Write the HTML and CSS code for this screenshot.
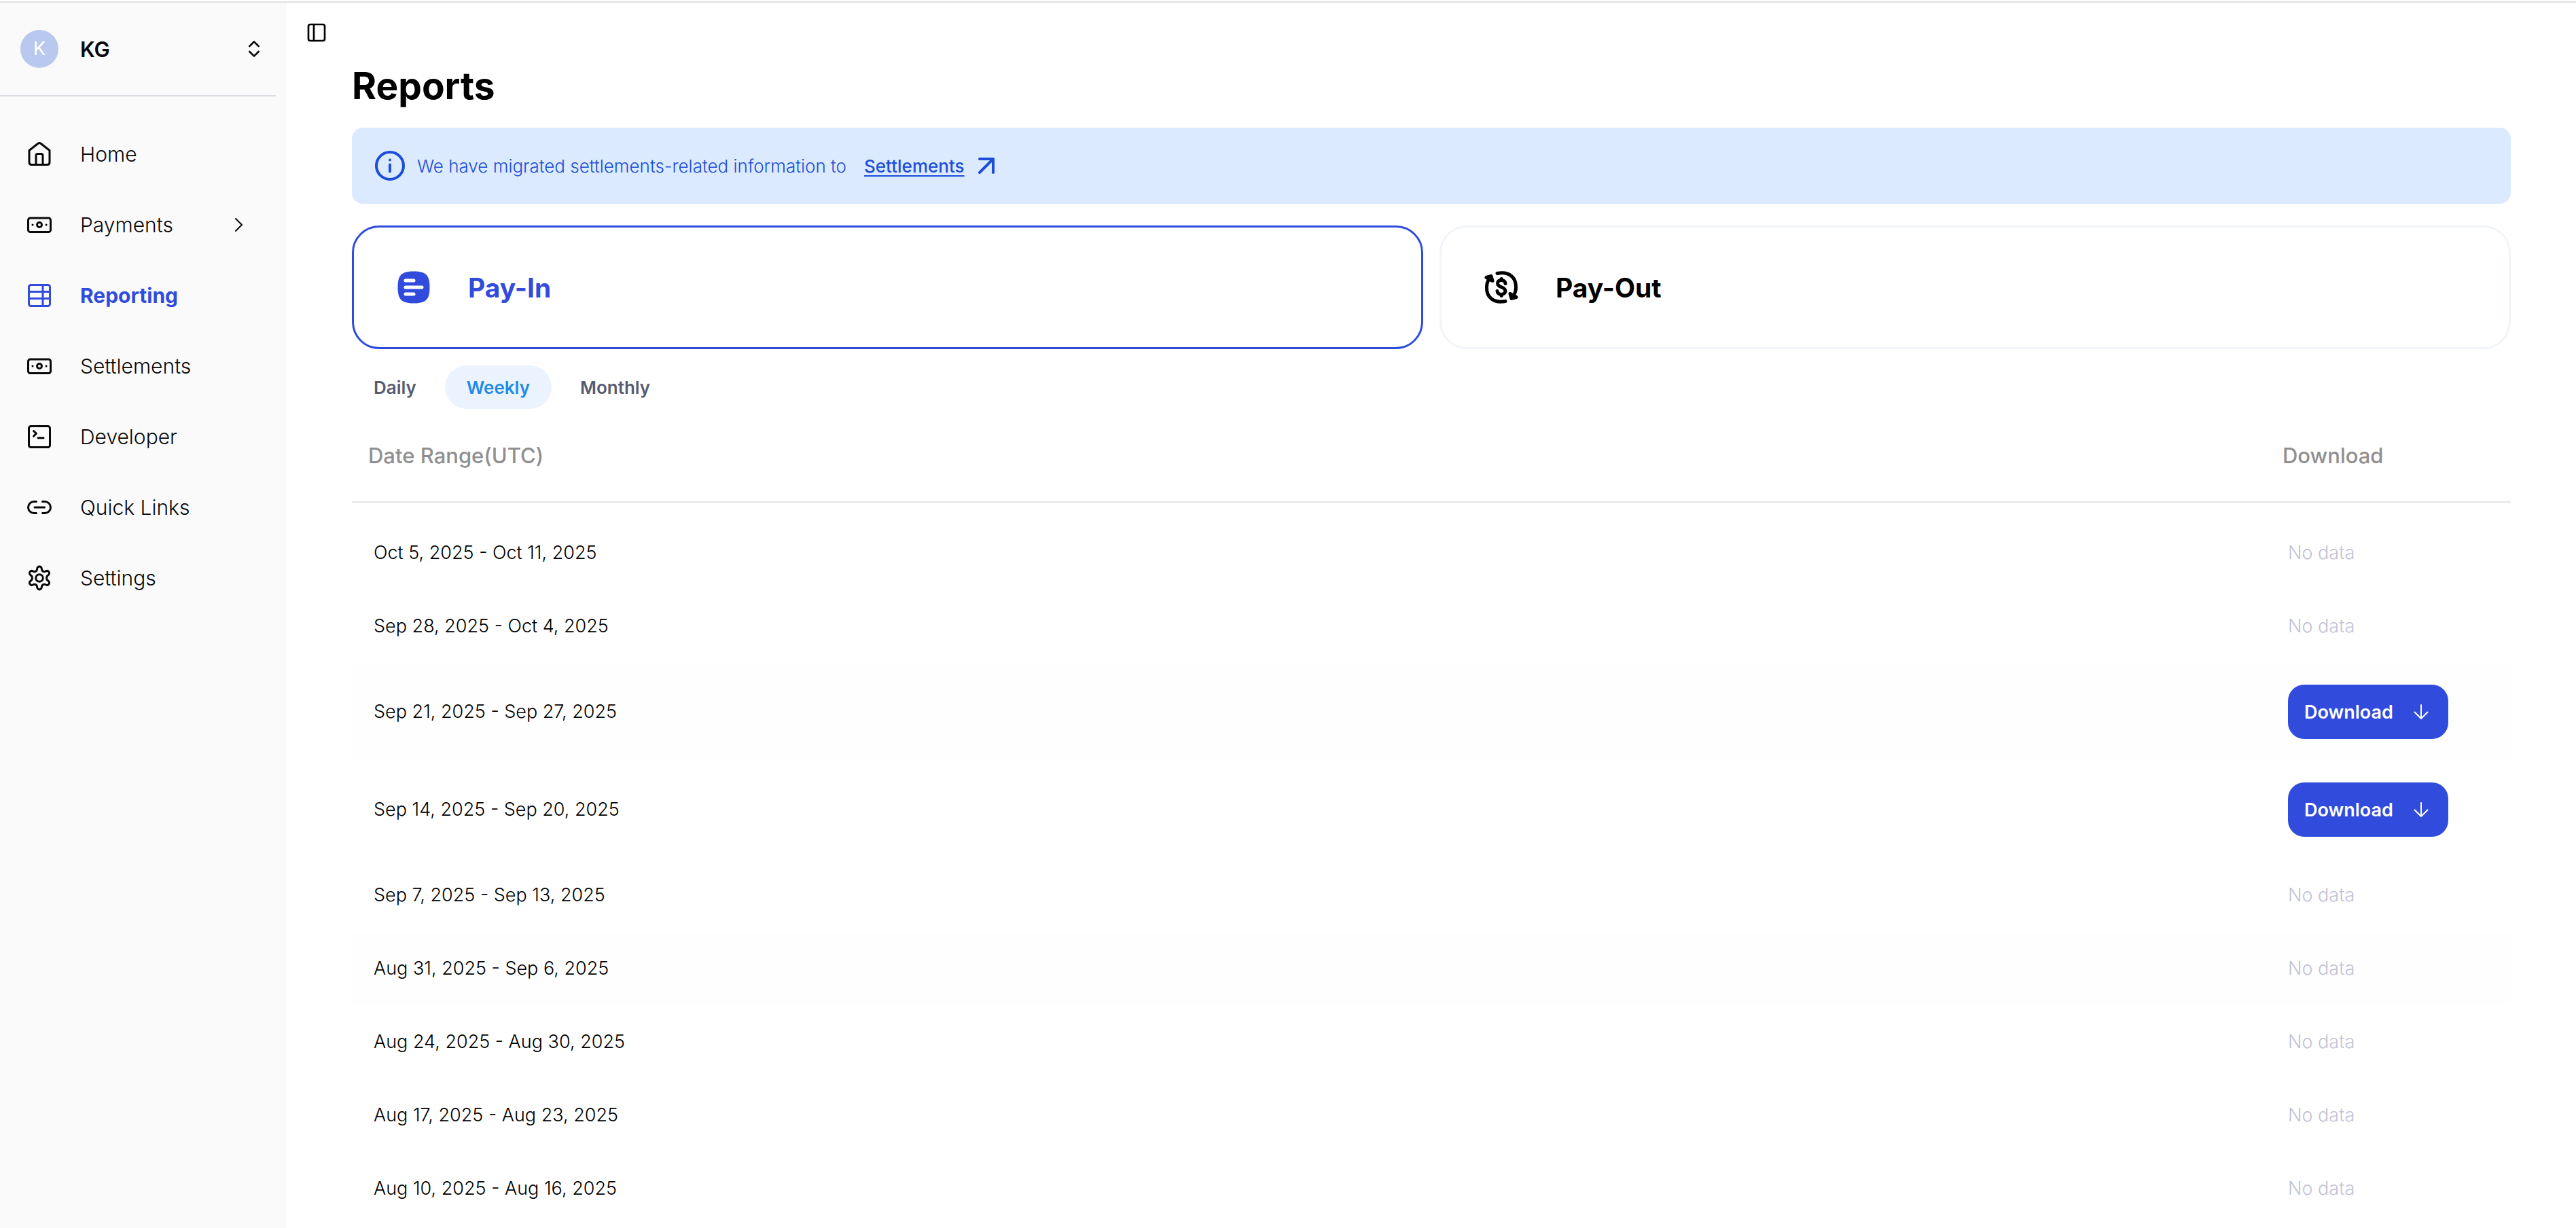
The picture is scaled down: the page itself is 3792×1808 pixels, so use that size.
FILE: index.html
```
<!DOCTYPE html>
<html lang="en">

<head>
    <meta charset="UTF-8">
    <meta name="viewport" content="width=device-width, initial-scale=1.0">
    <title>Reports</title>
    <link rel="stylesheet" href="styles.css">
</head>

<body>
    <div class="top-line"></div>
    <div class="layout">
        <aside class="sidebar">
            <button class="account" type="button">
                <span class="avatar">K</span>
                <span class="account-name">KG</span>
                <svg class="icon-sm" viewBox="0 0 24 24"><path d="m7 15 5 5 5-5M7 9l5-5 5 5" /></svg>
            </button>
            <nav class="menu">
                <a class="menu-item" href="#">
                    <svg class="icon" viewBox="0 0 40 40"><path d="M5 14.5 18 4.200Q20 2.800 22 4.200L35 14.500V32Q35 35.500 31.500 35.500H8.500Q5 35.500 5 32ZM15 35V22Q15 19.500 17.500 19.500H22.500Q25 19.500 25 22V35" /></svg>
                    <span>Home</span>
                </a>
                <a class="menu-item" href="#">
                    <svg class="icon" viewBox="0 0 40 40"><rect x="3.500" y="10" width="33" height="20.500" rx="3" /><circle cx="20" cy="20" r="3.500" /><path d="M10 20h.1M30 20h.1" /></svg>
                    <span>Payments</span>
                    <svg class="icon-chevron" viewBox="0 0 32 32"><path d="m11 7 9 9-9 9" /></svg>
                </a>
                <a class="menu-item active" href="#">
                    <svg class="icon" viewBox="0 0 40 40"><rect x="4.500" y="4.500" width="31" height="31" rx="3" /><path d="M4.500 14.500h31M4.500 24.500h31M25 4.500v31" /></svg>
                    <span>Reporting</span>
                </a>
                <a class="menu-item" href="#">
                    <svg class="icon" viewBox="0 0 40 40"><rect x="3.500" y="10" width="33" height="20.500" rx="3" /><circle cx="20" cy="20" r="3.500" /><path d="M10 20h.1M30 20h.1" /></svg>
                    <span>Settlements</span>
                </a>
                <a class="menu-item" href="#">
                    <svg class="icon" viewBox="0 0 40 40"><rect x="4.500" y="4.500" width="31" height="31" rx="3" /><path d="m11.500 11.500 4 3.800-4 4M18 21.700h8" /></svg>
                    <span>Developer</span>
                </a>
                <a class="menu-item" href="#">
                    <svg class="icon" viewBox="0 0 40 40"><path d="M15.500 11.500H12a8.500 8.500 0 0 0 0 17h3.500M24.500 11.500H28a8.500 8.500 0 0 1 0 17h-3.500M13 20h14.500" /></svg>
                    <span>Quick Links</span>
                </a>
                <a class="menu-item" href="#">
                    <svg class="icon" viewBox="0 0 40 40"><circle cx="20" cy="20" r="5.300" /><path d="M16.600 7C16.600 1.700 23.400 1.700 23.400 7C23.400 9.800 26.500 11.600 29 10.200C33.500 7.600 37 13.400 32.500 16.100C30 17.500 30 22.500 32.500 23.900C37 26.600 33.500 32.400 29 29.800C26.500 28.400 23.400 30.200 23.400 33C23.400 38.300 16.600 38.300 16.600 33C16.600 30.200 13.500 28.400 11 29.800C6.500 32.400 3 26.600 7.500 23.900C10 22.500 10 17.500 7.500 16.100C3 13.400 6.500 7.600 11 10.200C13.500 11.600 16.600 9.800 16.600 7Z" /></svg>
                    <span>Settings</span>
                </a>
            </nav>
        </aside>

        <div class="page">
            <header class="toolbar">
                <button class="toggle" type="button" aria-label="Toggle sidebar">
                    <svg class="icon-sm" viewBox="0 0 24 24"><rect x="3" y="3" width="18" height="18" rx="2" /><path d="M9 3v18" /></svg>
                </button>
            </header>
            <main class="content">
                <h1 class="title">Reports</h1>

                <div class="banner">
                    <svg class="icon-info" viewBox="0 0 48 48"><circle cx="24" cy="24" r="20" /><path d="M24 22.500v10M24 15.500v.1" /></svg>
                    <span class="banner-text">We have migrated settlements-related information to</span>
                    <a class="banner-link" href="#">Settlements</a>
                    <svg class="icon-arrow" viewBox="0 0 32 32"><path d="M6 6h20v20M26 6 6 26" /></svg>
                </div>

                <div class="cards">
                    <button class="card selected" type="button">
                        <svg class="icon-card" viewBox="0 0 56 56">
                            <path class="fill" d="M28 4.500C46 4.500 51.500 10 51.500 28S46 51.500 28 51.500 4.500 46 4.500 28 10 4.500 28 4.500Z" />
                            <path class="lines" d="M16 18h12M16 28h24M16 38h12" />
                        </svg>
                        <span>Pay-In</span>
                    </button>
                    <button class="card" type="button">
                        <svg class="icon-card" viewBox="0 0 56 56">
                            <path class="stroke" d="M22 7.500C40 4 50 14 49.500 28Q49.500 35 46 40M34 48.500C16 52 6 42 6.500 28Q6.500 21 10 16" />
                            <path class="arrow" d="M6 13.500 13 11.500 15 18.500ZM50 42.500 43 44.500 41 37.500Z" />
                            <path class="stroke" d="M34 22.500C33.500 15.500 22 16 22.500 22.500C23 29 34 26.500 34 33.500C33.500 40 22.500 40 22 33.500M28.200 15.500v2M28.200 38.500v2" />
                        </svg>
                        <span>Pay-Out</span>
                    </button>
                </div>

                <div class="tabs">
                    <button class="tab" type="button">Daily</button>
                    <button class="tab current" type="button">Weekly</button>
                    <button class="tab" type="button">Monthly</button>
                </div>

                <table class="reports">
                    <thead>
                        <tr>
                            <th>Date Range(UTC)</th>
                            <th class="col-download">Download</th>
                        </tr>
                    </thead>
                    <tbody>
                        <tr class="spacer"></tr>
                        <tr>
                            <td>Oct 5, 2025 - Oct 11, 2025</td>
                            <td><span class="no-data">No data</span></td>
                        </tr>
                        <tr>
                            <td>Sep 28, 2025 - Oct 4, 2025</td>
                            <td><span class="no-data">No data</span></td>
                        </tr>
                        <tr class="shaded">
                            <td>Sep 21, 2025 - Sep 27, 2025</td>
                            <td>
                                <button class="download" type="button">Download
                                    <svg class="icon-sm" viewBox="0 0 32 32"><path d="M16 6v20M6.500 16.500 16 26l9.500-9.500" /></svg>
                                </button>
                            </td>
                        </tr>
                        <tr>
                            <td>Sep 14, 2025 - Sep 20, 2025</td>
                            <td>
                                <button class="download" type="button">Download
                                    <svg class="icon-sm" viewBox="0 0 32 32"><path d="M16 6v20M6.500 16.500 16 26l9.500-9.500" /></svg>
                                </button>
                            </td>
                        </tr>
                        <tr>
                            <td>Sep 7, 2025 - Sep 13, 2025</td>
                            <td><span class="no-data">No data</span></td>
                        </tr>
                        <tr class="shaded">
                            <td>Aug 31, 2025 - Sep 6, 2025</td>
                            <td><span class="no-data">No data</span></td>
                        </tr>
                        <tr>
                            <td>Aug 24, 2025 - Aug 30, 2025</td>
                            <td><span class="no-data">No data</span></td>
                        </tr>
                        <tr>
                            <td>Aug 17, 2025 - Aug 23, 2025</td>
                            <td><span class="no-data">No data</span></td>
                        </tr>
                        <tr>
                            <td>Aug 10, 2025 - Aug 16, 2025</td>
                            <td><span class="no-data">No data</span></td>
                        </tr>
                    </tbody>
                </table>
            </main>
        </div>
    </div>
</body>

</html>
```
FILE: styles.css
```
* {
    box-sizing: border-box;
}

body {
    margin: 0;
    background-color: #fff;
    color: #000;
    font-family: Inter, "Liberation Sans", sans-serif;
}

button {
    font-family: inherit;
    color: inherit;
    background: none;
    border: 0;
    padding: 0;
    text-align: left;
    cursor: pointer;
}

svg {
    flex: none;
    fill: none;
    stroke: currentColor;
    stroke-width: 2;
    stroke-linecap: round;
    stroke-linejoin: round;
}

.top-line {
    height: 4px;
    border-bottom: 2px solid #e0e0e2;
}

.layout {
    display: flex;
    min-height: calc(100vh - 4px);
}

/* sidebar */
.sidebar {
    flex: none;
    width: 422px;
    padding-right: 16px;
    background-color: #fafafa;
    color: #09090b;
}

.account {
    display: flex;
    align-items: center;
    width: 100%;
    height: 138px;
    padding: 0 16px 0 30px;
    border-bottom: 2px solid #dcdbe3;
}

.avatar {
    width: 56px;
    height: 56px;
    margin-right: 32px;
    border-radius: 50%;
    background-color: #b9c8ee;
    color: #fff;
    font-size: 27px;
    line-height: 56px;
    text-align: center;
}

.account-name {
    flex: 1;
    font-size: 31px;
    font-weight: 600;
}

.menu {
    display: flex;
    flex-direction: column;
    padding-top: 33px;
}

.menu-item {
    display: flex;
    align-items: center;
    height: 104px;
    padding: 0 38px;
    color: inherit;
    font-size: 30px;
    font-weight: 300;
    text-decoration: none;
}

.menu-item span {
    flex: 1;
}

.active {
    color: #314cdc;
    font-weight: 700;
}

.icon {
    width: 40px;
    height: 40px;
    margin-right: 40px;
    stroke-width: 3;
}

.icon-sm,
.icon-chevron {
    width: 32px;
    height: 32px;
}

/* main area */
.page {
    flex: 1;
}

.toolbar {
    display: flex;
    align-items: center;
    height: 88px;
    padding-left: 28px;
}

.toggle {
    display: flex;
}

.content {
    padding: 0 96px;
}

.title {
    margin: 0 0 28px;
    font-size: 55px;
    font-weight: 700;
    line-height: 68px;
}

.banner {
    display: flex;
    align-items: center;
    height: 112px;
    margin-bottom: 32px;
    padding: 0 32px;
    border-radius: 16px;
    background-color: #dbeafe;
    color: #1d4ed8;
    font-size: 26px;
    font-weight: 300;
}

.icon-info {
    width: 48px;
    height: 48px;
    margin-right: 16px;
    stroke-width: 4;
}

.banner-link {
    margin: 0 16px 0 26px;
    color: inherit;
    font-weight: 500;
    text-underline-offset: 4px;
}

.icon-arrow {
    width: 32px;
    height: 32px;
    stroke-width: 4;
}

.cards {
    display: grid;
    grid-template-columns: 1fr 1fr;
    gap: 24px;
    margin-bottom: 24px;
}

.card {
    display: flex;
    align-items: center;
    gap: 52px;
    height: 182px;
    padding: 0 60px;
    border: 3px solid #f1f5f9;
    border-radius: 40px;
    font-size: 39px;
    font-weight: 700;
}

.selected {
    border-color: #314cdc;
    color: #314cdc;
}

.icon-card {
    width: 56px;
    height: 56px;
    stroke-width: 5;
}

.fill {
    fill: currentColor;
    stroke: none;
}

.lines {
    stroke: #fff;
}

.arrow {
    fill: currentColor;
}

.tabs {
    display: flex;
    gap: 10px;
}

.tab {
    height: 64px;
    padding: 0 32px;
    border-radius: 32px;
    color: #585c70;
    font-size: 26px;
    font-weight: 600;
}

.current {
    background-color: #ebf4fe;
    color: #228be6;
}

/* reports table */
.reports {
    width: 100%;
    border-spacing: 0;
}

.reports th {
    height: 138px;
    padding: 0 24px;
    border-bottom: 2px solid #e5e5e5;
    color: #8f8f8f;
    font-size: 31px;
    font-weight: 500;
    text-align: left;
}

.col-download {
    width: 360px;
}

.spacer {
    height: 20px;
}

.reports td {
    padding: 32px;
    font-size: 27px;
    font-weight: 300;
    line-height: 44px;
}

.shaded {
    background-color: #fefefe;
}

.no-data {
    color: #c1c2d6;
}

.download {
    display: flex;
    align-items: center;
    justify-content: space-between;
    width: 236px;
    height: 80px;
    padding: 0 24px;
    border-radius: 24px;
    background-color: #314cdc;
    color: #fff;
    font-size: 27px;
    font-weight: 600;
}
```
